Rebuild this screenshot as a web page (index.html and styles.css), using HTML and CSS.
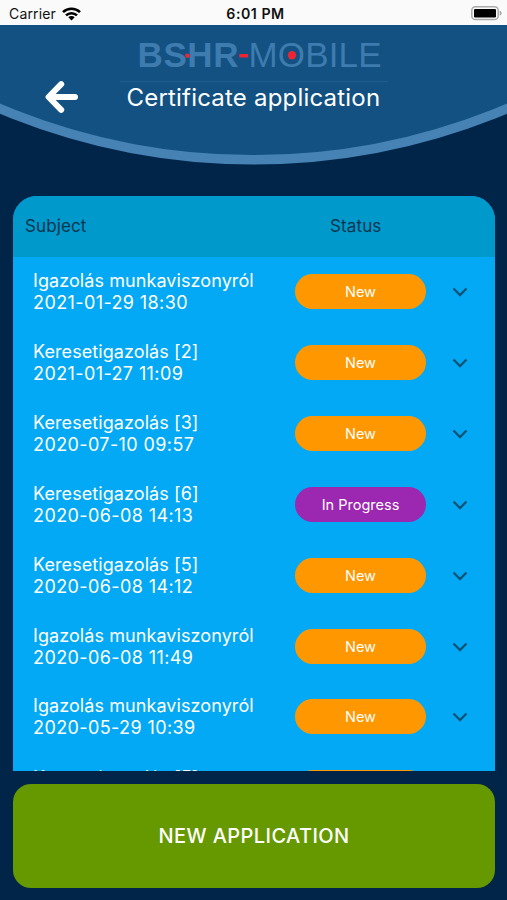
FILE: index.html
```html
<!DOCTYPE html>
<html lang="en">
<head>
<meta charset="utf-8">
<title>Certificate application</title>
<link rel="stylesheet" href="styles.css">
</head>
<body>
<div class="app">
  <div class="statusbar">
    <div class="carrier"><span>Carrier</span>
      <svg class="wifi" width="19" height="14" viewBox="0 0 19 14" fill="none" stroke="#000" stroke-width="2.6"><path d="M1 5.1a12.4 12.4 0 0 1 17 0M4 8.4a8 8 0 0 1 11 0"/><path d="M9.5 13.4L6.3 10.2a4.6 4.6 0 0 1 6.4 0z" fill="#000" stroke="none"/></svg>
    </div>
    <div class="clock">6:01 PM</div>
    <svg class="battery" width="31" height="15" viewBox="0 0 31 15"><rect x=".8" y=".8" width="26.4" height="12.8" rx="3.6" fill="#fafafa" stroke="#aaa" stroke-width="1.5"/><rect x="3" y="2.9" width="22" height="8.6" rx="1.2" fill="#000"/><path d="M28.6 4.6q2 .8 2 2.6t-2 2.6z" fill="#aaa"/></svg>
  </div>
  <header class="header">
    <svg class="arc" width="507" height="145" viewBox="0 25 507 145"><circle cx="253.5" cy="-494.5" r="654.3" fill="#125182" stroke="#4682b4" stroke-width="9.4"/></svg>
    <button class="back" aria-label="Back"><svg width="34" height="34" viewBox="0 0 34 34" fill="none" stroke="#fff" stroke-width="6" stroke-linecap="round" stroke-linejoin="round"><path d="M16.2 4.2L3.6 17l12.6 12.8" /><path d="M4.5 17H30"/></svg></button>
    <div class="heading">
      <svg class="logo" width="268" height="56" viewBox="120 26 268 56">
        <g class="logo-text">
          <text x="137.5" y="67" textLength="101" class="bold">BSHR</text>
          <text x="248.5" y="67" textLength="133">MOBILE</text>
        </g>
        <circle cx="187.4" cy="55.8" r="2.3" fill="#ea2634"/>
        <rect x="239.2" y="54" width="9" height="3.6" rx=".6" fill="#ea2634"/>
        <circle cx="292" cy="55.2" r="4.2" fill="#ea2634"/>
        <path d="M120 81.5h268" stroke="#205c8c"/>
      </svg>
      <h1 class="title">Certificate application</h1>
    </div>
  </header>
  <main class="card">
    <div class="row head"><span>Subject</span><span class="status-label">Status</span></div>
    <div class="row"><div class="subject">Igazolás munkaviszonyról<br><span class="date">2021-01-29 18:30</span></div><span class="pill">New</span><svg class="chev" viewBox="0 0 16 10"><path d="M1.5 1.5L8 8l6.5-6.5"/></svg></div>
    <div class="row"><div class="subject">Keresetigazolás [2]<br><span class="date">2021-01-27 11:09</span></div><span class="pill">New</span><svg class="chev" viewBox="0 0 16 10"><path d="M1.5 1.5L8 8l6.5-6.5"/></svg></div>
    <div class="row"><div class="subject">Keresetigazolás [3]<br><span class="date">2020-07-10 09:57</span></div><span class="pill">New</span><svg class="chev" viewBox="0 0 16 10"><path d="M1.5 1.5L8 8l6.5-6.5"/></svg></div>
    <div class="row"><div class="subject">Keresetigazolás [6]<br><span class="date">2020-06-08 14:13</span></div><span class="pill progress">In Progress</span><svg class="chev" viewBox="0 0 16 10"><path d="M1.5 1.5L8 8l6.5-6.5"/></svg></div>
    <div class="row"><div class="subject">Keresetigazolás [5]<br><span class="date">2020-06-08 14:12</span></div><span class="pill">New</span><svg class="chev" viewBox="0 0 16 10"><path d="M1.5 1.5L8 8l6.5-6.5"/></svg></div>
    <div class="row"><div class="subject">Igazolás munkaviszonyról<br><span class="date">2020-06-08 11:49</span></div><span class="pill">New</span><svg class="chev" viewBox="0 0 16 10"><path d="M1.5 1.5L8 8l6.5-6.5"/></svg></div>
    <div class="row"><div class="subject">Igazolás munkaviszonyról<br><span class="date">2020-05-29 10:39</span></div><span class="pill">New</span><svg class="chev" viewBox="0 0 16 10"><path d="M1.5 1.5L8 8l6.5-6.5"/></svg></div>
    <div class="row last"><div class="subject">Keresetigazolás [5]</div><span class="pill">&nbsp;</span></div>
  </main>
  <button class="new-app">NEW APPLICATION</button>
</div>
</body>
</html>
```
FILE: styles.css
```css
* { box-sizing: border-box; }
body { margin: 0; font-family: Inter, "Liberation Sans", sans-serif; }
button { font: inherit; border: 0; padding: 0; background: none; color: inherit; }
svg { display: block; }
.app {
  width: 507px; height: 900px; overflow: hidden;
  display: flex; flex-direction: column;
  background: #002549; color: #fff;
}
.statusbar {
  height: 25px; flex: none; padding: 0 5px 0 9px;
  display: grid; grid-template-columns: 1fr auto 1fr; align-items: center;
  background: #fafafa; color: #111; font-size: 14px;
}
.carrier { display: flex; align-items: center; gap: 6px; padding-top: 2px; letter-spacing: .15px; }
.clock { padding-top: 2px; font-weight: 600; font-size: 14.2px; letter-spacing: .5px; }
.battery { justify-self: end; margin-top: 1px; }
.header { position: relative; height: 171px; flex: none; display: flex; }
.arc { position: absolute; left: 0; top: 0; }
.back { position: relative; width: 34px; height: 34px; margin: 55px 0 0 45px; }
.heading { position: relative; width: 268px; margin: 1px 0 0 41px; }
.logo-text { font-family: "Liberation Sans", Arial, sans-serif; font-size: 35px; fill: #3e7bae; }
.bold { font-weight: 700; }
.title { margin: 1px 0 0 6.5px; font-size: 24px; line-height: 30px; font-weight: 400; letter-spacing: .2px; white-space: nowrap; }
.card {
  width: 482px; height: 575px; flex: none; margin-left: 13px;
  overflow: hidden; border-radius: 24px 24px 0 0; background: #03a9f4;
}
.row {
  height: 70.85px; padding-left: 20px;
  display: grid; grid-template-columns: 262px 131px 1fr; align-items: center;
}
.head {
  height: 61px; padding: 0 0 1px 12px; grid-template-columns: 305px 1fr;
  background: #0099cc; color: #06364f; font-size: 17px; letter-spacing: .12px;
}
.subject { font-size: 18px; line-height: 22px; letter-spacing: .08px; white-space: nowrap; }
.date { letter-spacing: .4px; }
.pill {
  height: 35px; margin-top: -1px; border-radius: 18px; background: #ff9800;
  display: flex; align-items: center; justify-content: center; font-size: 14.5px;
}
.progress { background: #9c27b0; }
.last { align-items: start; }
.last .subject { margin-top: 14px; }
.last .pill { margin-top: 17.5px; }
.chev { width: 16px; height: 10px; margin-left: 26px; fill: none; stroke: #075476; stroke-width: 2.3; }
.new-app {
  width: 482px; height: 104px; flex: none; margin: 13px 0 0 13px;
  border-radius: 18px; background: #669900; color: #fff; font-size: 20px; font-weight: 500; letter-spacing: .42px;
}
```
